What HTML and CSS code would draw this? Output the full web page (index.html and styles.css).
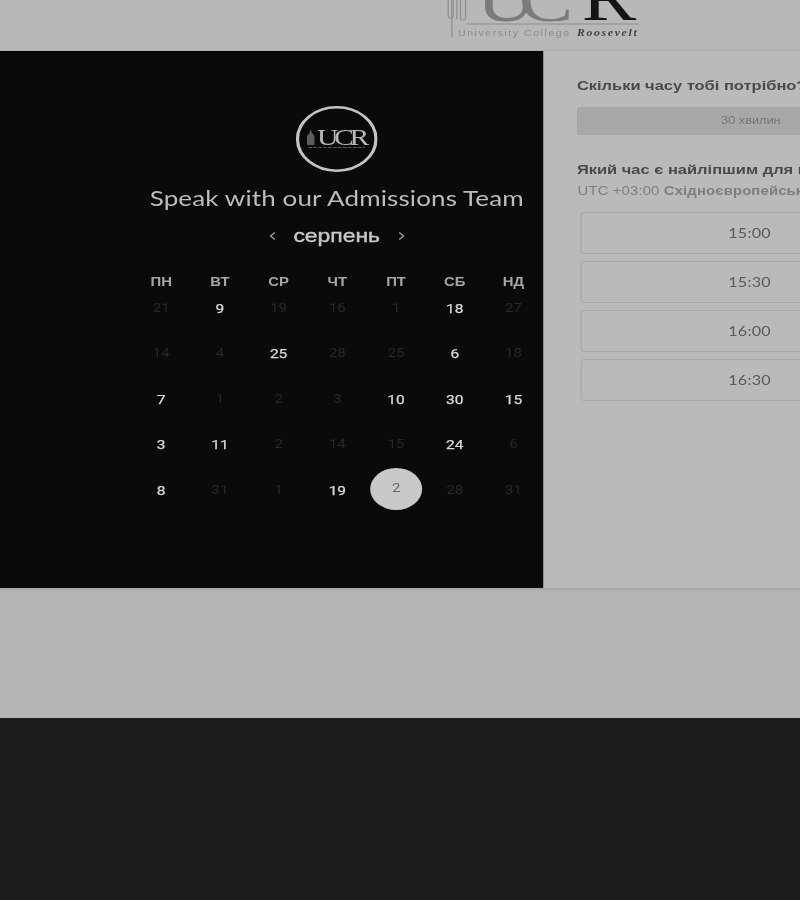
FILE: index.html
```html
<!DOCTYPE html>
<html lang="uk">
<head>
<meta charset="utf-8">
<title>Speak with our Admissions Team</title>
<link rel="stylesheet" href="styles.css">
</head>
<body>
<div class="page">
  <header class="top">
    <svg class="brand" width="160" height="50" viewBox="0 0 160 50">
      <g fill="none" stroke="#8e8e8e" stroke-width="1">
        <path d="M4 -2V37"/>
        <path d="M1 -2V15q0 3 2 3t2-3V-2"/>
        <path d="M8 -2V19M11 -2V19q2 2 4 0V-2"/>
        <path d="M15 24H155" stroke-width="1.2"/>
      </g>
      <text class="brand-big brand-grey" x="24" y="21">U</text>
      <text class="brand-big brand-grey" x="58" y="21">C</text>
      <text class="brand-big brand-dark" x="109" y="20">R</text>
      <text class="brand-small" x="9" y="36">University College</text>
      <text class="brand-script" x="105" y="36">Roosevelt</text>
    </svg>
  </header>
  <main class="booking">
    <section class="cal">
      <svg class="seal" width="66" height="66" viewBox="0 0 66 66">
        <circle cx="33" cy="33" r="31.7" fill="none" stroke="#c4c4c4" stroke-width="2.6"/>
        <path d="M9 39V30l2-3 1-4 1 4 2 3V39z" fill="#5c5c5c"/>
        <text class="seal-big" x="17" y="39">UCR</text>
        <path d="M10 41.500H56" stroke="#565656" stroke-width="1.200" stroke-dasharray="3 1"/>
      </svg>
      <h1 class="cal-title">Speak with our Admissions Team</h1>
      <div class="month">
        <svg class="chev" width="8" height="10" viewBox="0 0 8 10"><path d="M6 1.5 2.5 5 6 8.500" fill="none" stroke="#9a9a9a" stroke-width="1.200"/></svg>
        <span class="month-name">серпень</span>
        <svg class="chev" width="8" height="10" viewBox="0 0 8 10"><path d="M1.500 1.5 5 5 1.500 8.500" fill="none" stroke="#9a9a9a" stroke-width="1.200"/></svg>
      </div>
      <div class="week">
        <span>ПН</span><span>ВТ</span><span>СР</span><span>ЧТ</span><span>ПТ</span><span>СБ</span><span>НД</span>
      </div>
      <div class="days">
        <span class="off">21</span><span class="on">9</span><span class="off">19</span><span class="off">16</span><span class="off">1</span><span class="on">18</span><span class="off">27</span>
        <span class="off">14</span><span class="off">4</span><span class="on">25</span><span class="off">28</span><span class="off">25</span><span class="on">6</span><span class="off">18</span>
        <span class="on">7</span><span class="off">1</span><span class="off">2</span><span class="off">3</span><span class="on">10</span><span class="on">30</span><span class="on">15</span>
        <span class="on">3</span><span class="on">11</span><span class="off">2</span><span class="off">14</span><span class="off">15</span><span class="on">24</span><span class="off">6</span>
        <span class="on">8</span><span class="off">31</span><span class="off">1</span><span class="on">19</span><span class="picked"><b>2</b></span><span class="off">28</span><span class="off">31</span>
      </div>
    </section>
    <section class="slots">
      <h2 class="q">Скільки часу тобі потрібно?</h2>
      <div class="length">30 хвилин</div>
      <h2 class="q q-second">Який час є найліпшим для вас?</h2>
      <p class="zone">UTC +03:00 <b>Східноєвропейський час</b></p>
      <ul class="times">
        <li>15:00</li>
        <li>15:30</li>
        <li>16:00</li>
        <li>16:30</li>
      </ul>
    </section>
  </main>
  <div class="gap"></div>
</div>
<footer class="foot"></footer>
</body>
</html>
```

FILE: styles.css
```css
html, body {
  margin: 0;
  padding: 0;
  width: 800px;
  height: 900px;
  overflow: hidden;
  background: #1c1c1c;
}
* { box-sizing: border-box; }

/* The captured page is stretched horizontally: one scale on the root. */
.page {
  width: 790px;
  height: 718px;
  transform: scaleX(1.238);
  transform-origin: 0 0;
  background: #b5b5b5;
  font-family: "Liberation Sans", Arial, sans-serif;
  filter: blur(0.45px);
  overflow: hidden;
}

.top {
  height: 51px;
  padding-left: 361px;
  background: #b8b8b8;
  border-bottom: 1px solid #acacac;
}
.brand { display: block; }
.brand-big { font: 66px "Liberation Serif", serif; }
.brand-grey { fill: #7b7b7b; }
.brand-dark { fill: #141414; }
.brand-small { font: 8.500px "Liberation Sans", sans-serif; letter-spacing: 1.250px; fill: #8a8a8a; }
.brand-script { font: italic bold 9.500px "Liberation Serif", serif; letter-spacing: 1.350px; fill: #444; }

.booking {
  display: flex;
  height: 538px;
  border-bottom: 1px solid #a4a4a4;
  box-shadow: 0 1px 2px #a8a8a8;
}
.cal {
  width: 439px;
  flex: none;
  padding: 55px 0 0 105px;
  background: #0a0a0a;
  display: flex;
  flex-direction: column;
  align-items: center;
}
.seal { display: block; }
.seal-big { font: 24px "Liberation Serif", serif; letter-spacing: -3.500px; fill: #b8b8b8; }

.cal-title {
  margin: 13px 0 0;
  font: 400 21px/26px Lato, sans-serif;
  letter-spacing: .1px;
  color: #bcbcbc;
  white-space: nowrap;
}
.month {
  margin-top: 12px;
  height: 26px;
  display: flex;
  align-items: center;
  gap: 13.500px;
}
.month-name { font-size: 18.500px; color: #c8c8c8; -webkit-text-stroke: .4px #c8c8c8; }

.week, .days {
  width: 332px;
  margin-left: 1px;
  display: grid;
  grid-template-columns: repeat(7, 1fr);
  text-align: center;
}
.week {
  margin-top: 26px;
  font-size: 12px;
  font-weight: 700;
  line-height: 14px;
  color: #a6a6a6;
}
.days {
  margin-top: 2.500px;
  grid-auto-rows: 45.5px;
  font: 12.500px/21px Roboto, sans-serif;
}
.days span { display: flex; justify-content: center; align-items: flex-start; padding-top: 8px; line-height: 17px; }
.off { color: #282828; font-size: 12px; }
.on { color: #d8d8d8; -webkit-text-stroke: .25px #d8d8d8; }
.days .picked { padding-top: 0; color: #666; }
.picked b {
  width: 42px;
  height: 42px;
  border-radius: 50%;
  background: #c9c9c9;
  font-weight: 400;
  font-size: 12px;
  line-height: 40px;
  text-align: center;
  margin-top: -6px;
}

.slots {
  width: 335px;
  flex: none;
  padding: 0 27px;
  background: #bababa;
}
.q {
  margin: 26px 0 0;
  font-size: 13.300px;
  line-height: 17px;
  color: #4a4a4a;
  white-space: nowrap;
}
.length {
  margin-top: 13px;
  height: 28px;
  background: #a8a8a8;
  border: 1px solid #a4a4a4;
  border-radius: 3px;
  text-align: center;
  font-size: 10.300px;
  line-height: 26px;
  color: #757575;
}
.q-second { margin-top: 26px; }
.zone {
  margin: 6px 0 0;
  padding-left: .5px;
  font-size: 12px;
  line-height: 14px;
  letter-spacing: .12px;
  color: #7e7e7e;
  white-space: nowrap;
}
.times {
  list-style: none;
  margin: 14px 0 0;
  padding: 0 4px 0 3px;
}
.times li {
  height: 42px;
  margin-bottom: 7px;
  border: 1px solid #a9a9a9;
  border-radius: 3px;
  text-align: center;
  font: 13px/40px Lato, sans-serif;
  letter-spacing: .2px;
  text-indent: -1px;
  color: #5a5a5a;
}
.gap { height: 129px; }
.foot { height: 182px; background: #1c1c1c; }
```
